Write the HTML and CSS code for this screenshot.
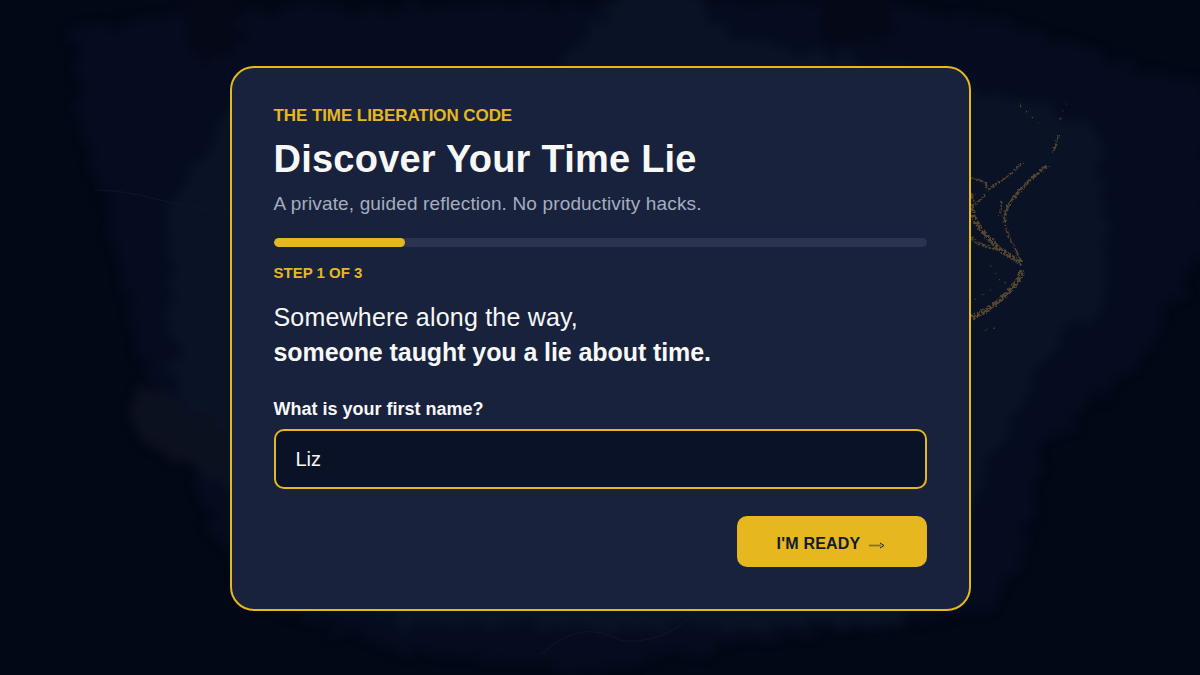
FILE: index.html
```html
<!DOCTYPE html>
<html lang="en">
<head>
<meta charset="utf-8">
<title>Discover Your Time Lie</title>
<link rel="stylesheet" href="styles.css">
</head>
<body>
<svg class="backdrop" viewBox="0 0 1200 675" preserveAspectRatio="none" aria-hidden="true">
  <defs>
    <filter id="soft" x="-10%" y="-10%" width="120%" height="120%" color-interpolation-filters="sRGB">
      <feTurbulence type="fractalNoise" baseFrequency="0.05" numOctaves="5" seed="4" result="n"/>
      <feDisplacementMap in="SourceGraphic" in2="n" scale="30" xChannelSelector="R" yChannelSelector="G" result="d"/>
      <feGaussianBlur in="d" stdDeviation="5"/>
    </filter>
    <filter id="vein" x="-20%" y="-20%" width="140%" height="140%" color-interpolation-filters="sRGB">
      <feTurbulence type="fractalNoise" baseFrequency="0.45" numOctaves="2" seed="8" result="n"/>
      <feDisplacementMap in="SourceGraphic" in2="n" scale="4" xChannelSelector="R" yChannelSelector="G" result="d"/>
      <feColorMatrix in="n" type="matrix" values="0 0 0 0 0  0 0 0 0 0  0 0 0 0 0  0 0 0 9 -3.4" result="mask"/>
      <feComposite in="d" in2="mask" operator="in"/>
    </filter>
  </defs>
  <g filter="url(#soft)">
    <path class="wash-a" d="M75 30 L190 12 L260 10 L800 0 L1000 20 L1210 90 L1210 240 L1150 350 L1095 400 L1040 450 L1032 510 L1020 570 L980 612 L750 640 L600 672 L400 650 L250 600 L200 500 L135 340 L115 250 L80 120 Z"/>
    <path class="wash-b" d="M560 70 L625 -10 L700 -10 L720 35 L800 50 L990 90 L1100 130 L1105 300 L1050 350 L1012 420 L975 500 L900 625 L400 625 L230 500 L180 400 L165 220 L230 110 Z"/>
    <path class="wash-c" d="M135 385 L235 430 L235 480 L190 470 L130 425 Z"/>
    <path class="wash-d" d="M810 -10 L900 -10 L885 40 L830 45 Z"/>
    <path class="wash-d" d="M188 -10 L240 -10 L240 45 L205 65 L190 40 Z"/>
  </g>
  <g class="veins" filter="url(#vein)">
    <path class="vein-thin" d="M1059 135 L1053 153"/>
    <path d="M1048 165 C1042 170 1035 175 1027 183 C1020 190 1012 200 1008 206 C1005 212 1004 218 1005 223"/>
    <path class="vein-thin" d="M1005 225 C1007 235 1012 243 1017 253 L1022 263"/>
    <path class="vein-thin" d="M988 190 C995 184 1003 180 1010 175 L1023 162"/>
    <path class="vein-thin" d="M972 178 L985 182 L988 190"/>
    <path class="vein-wide" d="M972 193 C970 205 972 215 975 220 C980 230 990 240 997 247 C1005 253 1015 260 1022 263"/>
    <path d="M972 237 C976 243 985 247 997 249"/>
    <path class="vein-wide" d="M1022 270 C1020 280 1013 288 1000 300 C990 308 980 314 972 318"/>
    <path class="vein-thin" d="M1000 215 L1002 200 M975 205 L985 195"/>
    <path class="vein-dots" d="M975 300 L1010 280 M985 330 L1000 327 M990 265 L1000 280"/>
    <path class="vein-dots" d="M1020 105 L1040 125 M1060 120 L1066 100"/>
  </g>
  <g class="lines">
    <path d="M95 190 C140 190 160 205 230 212"/>
    <path d="M540 655 C570 630 590 625 620 640 C650 645 680 630 695 612"/>
  </g>
</svg>
<main class="card">
  <p class="eyebrow">THE TIME LIBERATION CODE</p>
  <h1 class="title">Discover Your Time Lie</h1>
  <p class="subtitle">A private, guided reflection. No productivity hacks.</p>
  <div class="progress"><div class="progress-fill"></div></div>
  <p class="step">STEP 1 OF 3</p>
  <p class="lead">Somewhere along the way,<br><strong>someone taught you a lie about time.</strong></p>
  <label class="field-label" for="name">What is your first name?</label>
  <input class="field" id="name" type="text" value="Liz">
  <div class="actions">
    <button class="cta" type="button">I'M READY<svg class="cta-arrow" viewBox="0 0 15 7" aria-hidden="true"><path class="arrow-shaft" d="M0 3.5H12"/><path class="arrow-head" d="M11 1 L15 3.5 L11 6"/></svg></button>
  </div>
</main>
</body>
</html>
```
FILE: styles.css
```css
* { box-sizing: border-box; }
html, body { height: 100%; }
body {
  margin: 0;
  height: 675px;
  padding-top: 2px;
  overflow: hidden;
  display: flex;
  align-items: center;
  justify-content: center;
  background: #020815;
  font-family: "Liberation Sans", Arial, sans-serif;
  color: #f7f7f5;
}
.backdrop { position: absolute; left: 0; top: 0; width: 1200px; height: 675px; }
.wash-a { fill: #050c20; }
.wash-b { fill: #0a1226; }
.wash-c { fill: #0c1120; }
.wash-d { fill: #040817; }
.veins { fill: none; stroke: #57462f; stroke-width: 3; }
.vein-thin { stroke-width: 2; }
.vein-wide { stroke-width: 5; }
.vein-dots { stroke-width: 1.5; stroke-dasharray: 1.5 7; }
.lines { fill: none; stroke: #111526; stroke-width: 1; }
.card {
  position: relative;
  width: 741px;
  height: 545px;
  padding: 35px 42px 0;
  border: 2px solid #e6b71e;
  border-radius: 24px;
  background: #18223d;
}
.eyebrow { margin: 0; font-size: 17px; line-height: 26px; font-weight: 700; letter-spacing: -.08px; color: #e6b71e; }
.title { margin: 7px 0 0; font-size: 38px; line-height: 46px; font-weight: 700; letter-spacing: .23px; }
.subtitle { margin: 9px 0 0; font-size: 19px; line-height: 26px; letter-spacing: .15px; color: #a6aebf; }
.progress { margin-top: 21px; height: 9px; border-radius: 5px; background: #2a3450; overflow: hidden; }
.progress-fill { width: 131px; height: 100%; border-radius: 5px; background: #e6b71e; }
.step { margin: 17px 0 0; font-size: 15px; line-height: 18px; font-weight: 700; color: #e6b71e; }
.lead { margin: 18px 0 0; font-size: 25px; line-height: 35px; letter-spacing: .2px; }
.lead strong { font-weight: 700; letter-spacing: -.08px; }
.field-label { display: block; margin-top: 26px; font-size: 18px; line-height: 26px; font-weight: 700; }
.field {
  display: block;
  width: 100%;
  height: 60px;
  margin-top: 7px;
  padding: 0 20px;
  border: 2px solid #e6b71e;
  border-radius: 10px;
  background: #0a1227;
  color: #f7f7f5;
  font: 20px "Liberation Sans", Arial, sans-serif;
  outline: none;
}
.actions { display: flex; justify-content: flex-end; margin-top: 27px; }
.cta {
  display: flex;
  align-items: center;
  justify-content: center;
  gap: 9px;
  width: 190px;
  height: 51px;
  padding: 5px 2px 0 0;
  border: 0;
  border-radius: 10px;
  background: #e6b71e;
  color: #111a30;
  font: 700 16px "Liberation Sans", Arial, sans-serif;
  letter-spacing: .2px;
}
.cta-arrow { width: 15px; height: 7px; margin-top: 2px; }
.arrow-shaft { fill: none; stroke: #8a7128; stroke-width: 1.8; }
.arrow-head { fill: none; stroke: #18223d; stroke-width: 1; }
```
